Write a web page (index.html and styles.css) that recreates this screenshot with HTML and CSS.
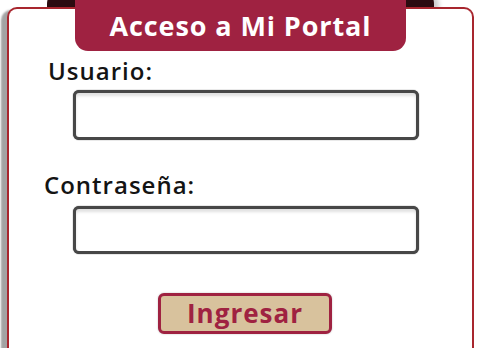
FILE: index.html
```
<!DOCTYPE html>
<html lang="es">
<head>
<meta charset="utf-8">
<link rel="stylesheet" href="styles.css">
</head>
<body>
<div class="stage">
  <div class="ribbon"></div>
  <form class="card">
    <h1 class="tab">Acceso a Mi Portal</h1>
    <label class="label label-user" for="u">Usuario:</label>
    <input class="field field-user" id="u" type="text">
    <label class="label label-pass" for="p">Contraseña:</label>
    <input class="field field-pass" id="p" type="password">
    <div class="actions">
      <button class="btn" type="button">Ingresar</button>
    </div>
  </form>
</div>
</body>
</html>
```
FILE: styles.css
```
html, body {
  margin: 0;
  padding: 0;
  background: #fff;
  overflow: hidden;
}
body {
  font-family: "Open Sans", "Noto Sans", sans-serif;
  width: 484px;
  height: 348px;
}
.stage {
  position: relative;
  height: 341px;
  padding: 7px 0 0 7px;
}
.ribbon {
  position: absolute;
  left: 47px;
  top: -12px;
  width: 387px;
  height: 40px;
  border-radius: 16px;
  background: #2b0b10;
  box-shadow: 5px 1px 5px rgba(0,0,0,.2);
}
.card {
  position: relative;
  box-sizing: border-box;
  width: 467px;
  height: 341px;
  margin: 0;
  border: 2px solid #a8262e;
  border-bottom: none;
  border-radius: 10px 10px 0 0;
  background: #fff;
  box-shadow: -6px 3px 2px rgba(0,0,0,.36);
  display: flex;
  flex-direction: column;
  align-items: flex-start;
}
.tab {
  align-self: center;
  width: 331px;
  height: 60px;
  margin: -18px 0 0 0;
  box-sizing: border-box;
  padding-top: 19px;
  background: #9f2241;
  border-radius: 0 0 13px 13px;
  color: #fff;
  font-size: 27px;
  font-weight: 700;
  letter-spacing: 0.9px;
  line-height: 32px;
  text-align: center;
}
.label {
  color: #141414;
  font-size: 24px;
  font-weight: 600;
  letter-spacing: 1px;
  line-height: 28px;
}
.label-user {
  margin: 6px 0 0 39px;
}
.label-pass {
  margin: 31px 0 0 35px;
}
.field {
  box-sizing: border-box;
  width: 346px;
  margin: 0 0 0 64px;
  border: 3px solid #474747;
  border-radius: 6px;
  background: #fff;
  box-shadow: 0 0 1px #222, inset 0 3px 3px rgba(0,0,0,.12);
  outline: none;
}
.field-user {
  height: 50px;
  margin-top: 5px;
}
.field-pass {
  height: 48px;
  margin-top: 7px;
}
.actions {
  align-self: stretch;
  display: flex;
  justify-content: center;
  margin-top: 39px;
  padding-left: 9px;
}
.btn {
  box-sizing: border-box;
  width: 174px;
  height: 41px;
  border: 3px solid #9f2241;
  border-radius: 6px;
  background: #d8c29d;
  color: #9f2241;
  font-family: "Open Sans", "Noto Sans", sans-serif;
  font-size: 26px;
  font-weight: 700;
  letter-spacing: 1px;
  line-height: 35px;
  padding: 0;
  box-shadow: 0 0 2px rgba(0,0,0,.25);
}
```
